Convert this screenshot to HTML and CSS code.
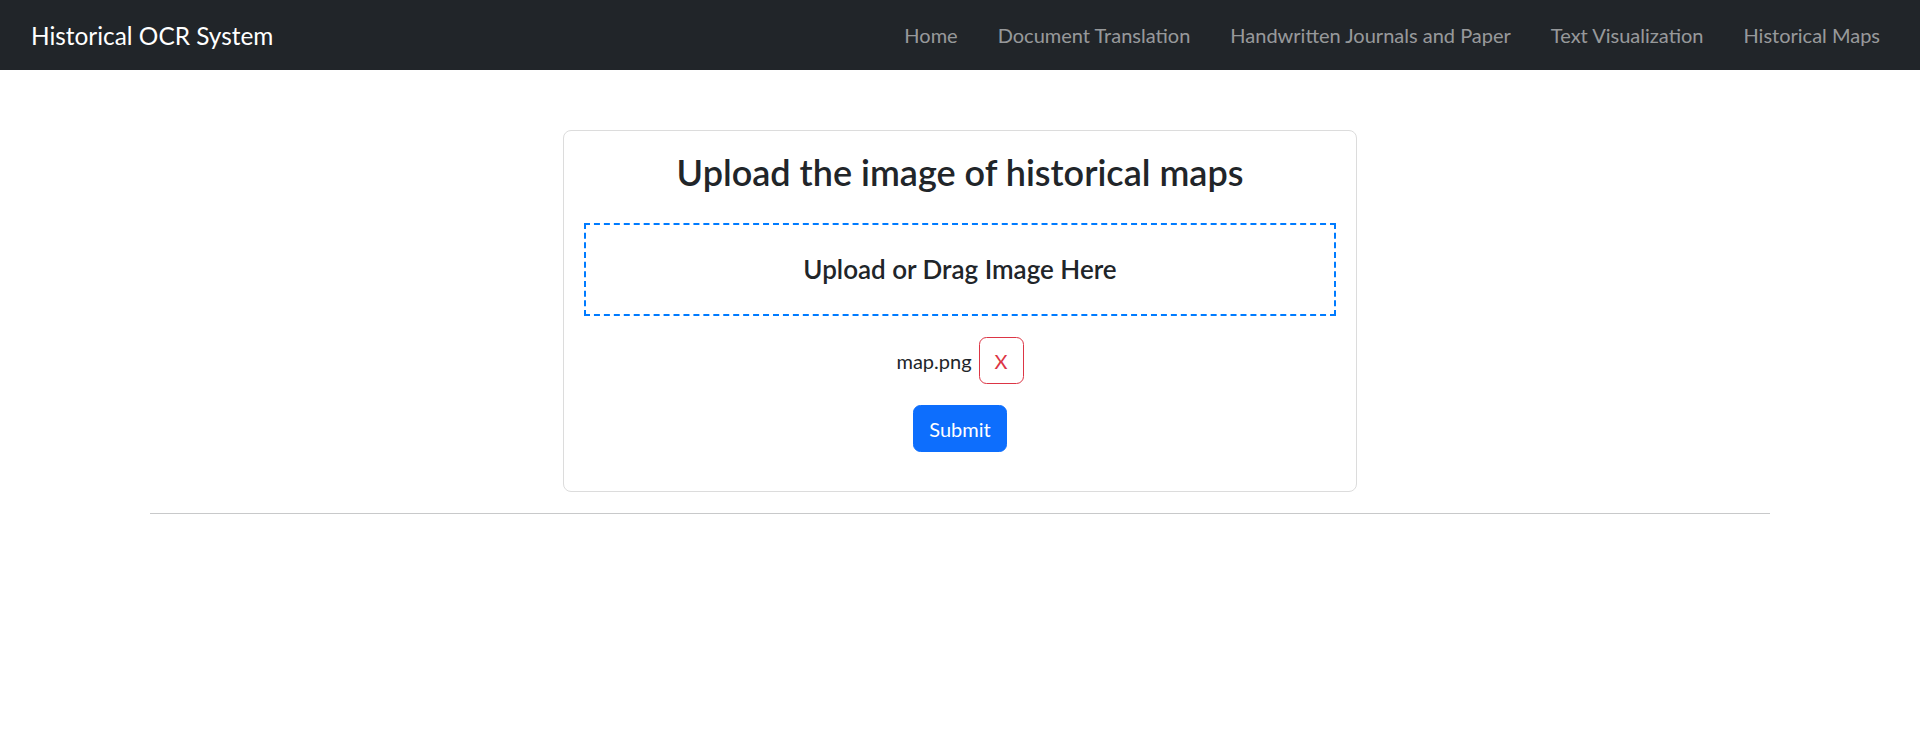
FILE: index.html
```html
<!DOCTYPE html>
<html lang="en">
<head>
<meta charset="utf-8">
<title>Historical Maps</title>
<link rel="stylesheet" href="styles.css">
</head>
<body>
<nav class="navbar">
  <a class="brand" href="#">Historical OCR System</a>
  <ul class="nav-links">
    <li><a href="#">Home</a></li>
    <li><a href="#">Document Translation</a></li>
    <li><a href="#">Handwritten Journals and Paper</a></li>
    <li><a href="#">Text Visualization</a></li>
    <li><a href="#">Historical Maps</a></li>
  </ul>
</nav>
<main class="main">
  <section class="card">
    <h3 class="card-title">Upload the image of historical maps</h3>
    <div class="dropzone">
      <h5 class="dropzone-text">Upload or Drag Image Here</h5>
    </div>
    <div class="file-row">
      <span class="file-name">map.png</span>
      <button class="btn btn-remove" type="button">X</button>
    </div>
    <div class="submit-row">
      <button class="btn btn-submit" type="button">Submit</button>
    </div>
  </section>
  <hr class="divider">
</main>
</body>
</html>
```
FILE: styles.css
```css
* { box-sizing: border-box; }

html, body {
  margin: 0;
  padding: 0;
  background: #ffffff;
}

body {
  font-family: "Lato", "Noto Sans", sans-serif;
  font-size: 20px;
  line-height: 1.5;
  color: #212529;
}

.navbar {
  height: 70px;
  background: #212529;
  display: flex;
  align-items: center;
  justify-content: space-between;
  padding: 0 20px 0 31px;
}

.brand {
  color: #ffffff;
  text-decoration: none;
  font-size: 24.4px;
  line-height: 37px;
  white-space: nowrap;
}

.nav-links {
  list-style: none;
  display: flex;
  margin: 0;
  padding: 0;
}

.nav-links a {
  display: block;
  padding: 10px 20px;
  color: rgba(255, 255, 255, 0.55);
  text-decoration: none;
  font-size: 20px;
  line-height: 30px;
  white-space: nowrap;
}

.main {
  padding-top: 60px;
}

.card {
  width: 794px;
  margin: 0 auto;
  border: 1px solid #dcdcdc;
  border-radius: 8px;
  padding: 20px 20px 39px;
  text-align: center;
}

.card-title {
  margin: 0 0 30px;
  font-size: 36px;
  font-weight: 600;
  line-height: 42px;
}

.dropzone {
  border: 2px dashed #007bff;
  padding: 29px 0 30px;
}

.dropzone-text {
  margin: 0;
  font-size: 26px;
  font-weight: 600;
  line-height: 30px;
}

.file-row {
  margin-top: 21px;
  display: flex;
  justify-content: center;
  align-items: baseline;
}

.file-name {
  line-height: 30px;
}

.btn {
  font-family: inherit;
  font-size: 20px;
  line-height: 30px;
  padding: 7.5px 15px;
  border-radius: 7.5px;
  border: 1px solid transparent;
  cursor: pointer;
}

.btn-remove {
  margin-left: 7px;
  background: #ffffff;
  color: #dc3545;
  border-color: #dc3545;
}

.submit-row {
  margin-top: 21px;
}

.btn-submit {
  background: #0d6efd;
  border-color: #0d6efd;
  color: #ffffff;
}

.divider {
  width: 1620px;
  margin: 21px auto 0;
  border: 0;
  border-top: 1px solid #c8c9ca;
}
```
